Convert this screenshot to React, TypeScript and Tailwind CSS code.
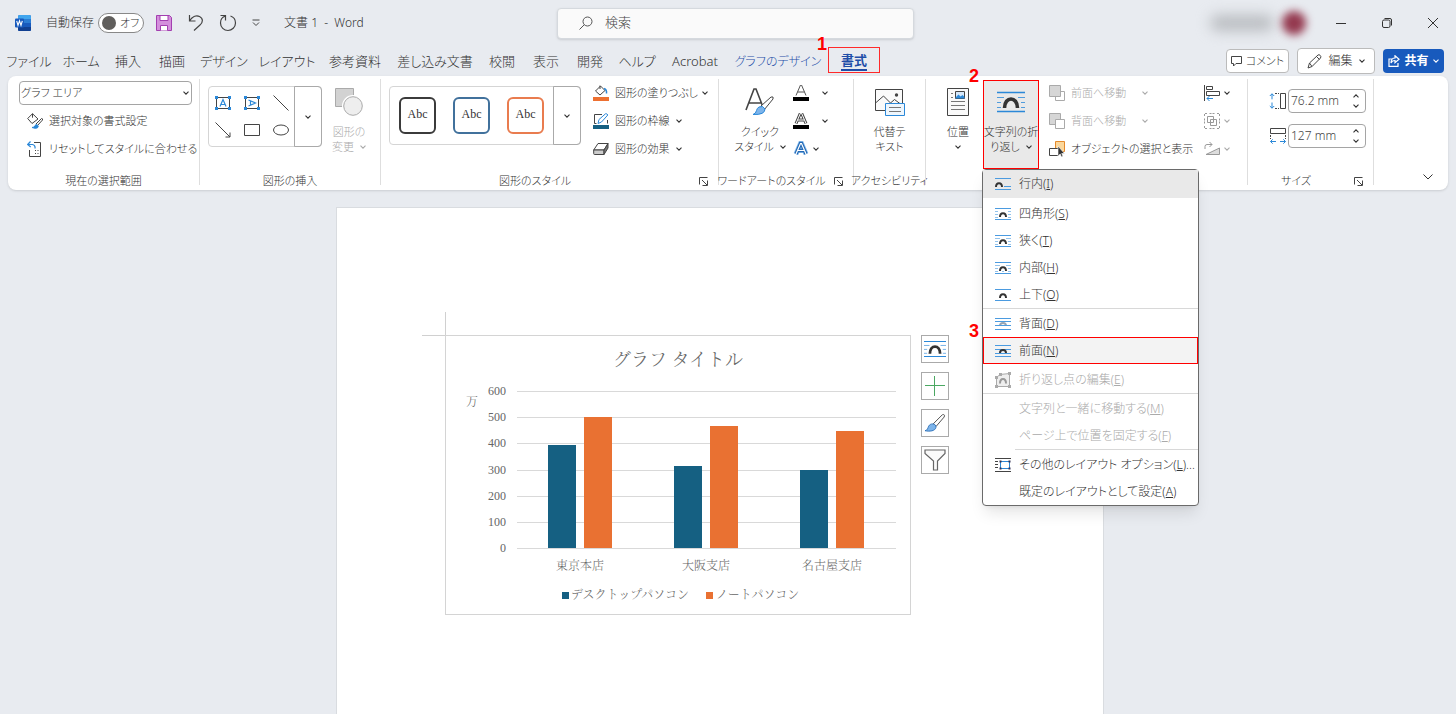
import type { ReactNode } from 'react';
import clsx from 'clsx';

const BLUE = '#2b88d8';
const INK = '#444';

type WrapKind = 'inline' | 'square' | 'tight' | 'through' | 'topBottom' | 'behind' | 'front';

function Chevron({ className }: { className?: string }) {
  return (
    <svg viewBox="0 0 6 4" className={clsx('h-1 w-1.5 shrink-0', className)} fill="none" stroke="currentColor" strokeWidth="1.1">
      <path d="M.5.6 3 3.1 5.5.6" />
    </svg>
  );
}

function WrapIcon({ kind }: { kind: WrapKind }) {
  const arch = (d: string, color = '#333') => <path d={d} stroke={color} strokeWidth="2" />;
  return (
    <svg viewBox="0 0 16 14" className="h-3.5 w-4 shrink-0" fill="none" stroke="#4b9be0">
      <path d="M0 1.5h16M0 12.5h16" />
      {kind === 'inline' && (
        <>
          {arch('M1 10c0-5 6-5 6 0')}
          <path d="M9 9.5h7" />
        </>
      )}
      {kind === 'square' && (
        <>
          <path d="M0 4.5h3M0 7.5h3M0 10.5h3M13 4.5h3M13 7.5h3M13 10.5h3" opacity=".6" />
          {arch('M5 10c0-5 6-5 6 0')}
        </>
      )}
      {kind === 'tight' && (
        <>
          <path d="M0 4.5h5M0 7.5h3M0 10.5h3M11 4.5h5M13 7.5h3M13 10.5h3" opacity=".6" />
          {arch('M5 10c0-5 6-5 6 0')}
        </>
      )}
      {kind === 'through' && (
        <>
          <path d="M0 4.5h5M0 7.5h3M0 10.5h3M11 4.5h5M13 7.5h3M13 10.5h3M7 10.5h2" opacity=".6" />
          {arch('M5 10c0-5 6-5 6 0')}
        </>
      )}
      {kind === 'topBottom' && arch('M5 10c0-5 6-5 6 0')}
      {kind === 'behind' && (
        <>
          {arch('M5 9c0-4 6-4 6 0', '#9aa5b1')}
          <path d="M0 4.5h16M0 8.5h16" />
        </>
      )}
      {kind === 'front' && (
        <>
          <path d="M0 5.5h16M0 9.5h16" />
          {arch('M5 9c0-4 6-4 6 0')}
        </>
      )}
    </svg>
  );
}

function BigWrapIcon({ className }: { className?: string }) {
  return (
    <svg viewBox="0 0 28 22" className={className} fill="none" stroke={BLUE}>
      <path d="M0 1.5h28M0 20.5h28" strokeWidth="1.4" />
      <path d="M0 6.5h7M0 11.5h4M0 16.5h4M21 6.5h7M24 11.5h4M24 16.5h4" opacity=".8" />
      <path d="M7.5 17c0-12 13-12 13 0" stroke="#333" strokeWidth="3.6" />
    </svg>
  );
}

function BrushIcon({ className }: { className?: string }) {
  return (
    <svg viewBox="0 0 24 22" className={className} fill="none">
      <path d="M10 12 20 2c1-1 3.500 0 2 2.500L13 15" fill="#fff" stroke="#555" strokeWidth="1.100" />
      <path d="M9.500 12c2 0 4 1.500 3.500 4-1 4-7 4.500-12 3.500 3-.5 3-3 4-5 1-1.800 2.500-2.500 4.500-2.500z" fill="#7db4ea" stroke="#2b6fb8" />
    </svg>
  );
}

const TABS = [
  { label: 'ファイル', width: 'w-9' },
  { label: 'ホーム', width: 'w-8' },
  { label: '挿入', width: 'w-[26px]' },
  { label: '描画', width: 'w-[26px]' },
  { label: 'デザイン', width: 'w-[42px]' },
  { label: 'レイアウト', width: 'w-[48px]' },
  { label: '参考資料', width: 'w-[52px]' },
  { label: '差し込み文書', width: 'w-[72px]' },
  { label: '校閲', width: 'w-[26px]' },
  { label: '表示', width: 'w-[26px]' },
  { label: '開発', width: 'w-[26px]' },
  { label: 'ヘルプ', width: 'w-8' },
  { label: 'Acrobat', width: 'w-[48px]' },
];

function TitleBar() {
  return (
    <header className="flex h-[46px] items-center pl-[15px] text-xs">
      <div className="flex flex-1 items-center whitespace-nowrap">
        <svg viewBox="0 0 16 16" className="h-4 w-4">
          <rect x="3" width="13" height="16" rx="1.500" fill="#185abd" />
          <path d="M3 1.500Q3 0 4.500 0h10Q16 0 16 1.500V4H3z" fill="#41a5ee" />
          <path d="M3 4h13v4H3z" fill="#2b7cd3" />
          <path d="M3 12h13v2.500q0 1.500-1.500 1.500h-10Q3 16 3 14.500z" fill="#103f91" />
          <rect y="3.500" width="9" height="9" rx="1" fill="#185abd" />
          <path d="m1.700 5.800 1.300 4.500 1.500-4.500L6 10.300l1.300-4.500" fill="none" stroke="#fff" strokeWidth="1.100" />
        </svg>
        <label className="ml-[15px] flex items-center gap-1">
          自動保存
          <input type="checkbox" className="peer sr-only" />
          <span className="flex h-5 w-[46px] items-center gap-1 rounded-full border border-[#888] bg-white pl-[3px] text-[11px]">
            <span className="h-3.5 w-3.5 shrink-0 rounded-full bg-[#605e5c]" />
            オフ
          </span>
        </label>
        <button type="button" aria-label="保存" className="ml-3">
          <svg viewBox="0 0 16 16" className="h-4 w-4" fill="#d48fdc" stroke="#a33fb0">
            <path d="M.5.5h13l2 2v13H.5z" />
            <path d="M4 .5h8v5H4zM4.500 15.500v-5h7v5" fill="#fff" />
          </svg>
        </button>
        <button type="button" aria-label="元に戻す" className="ml-4">
          <svg viewBox="0 0 16 18" className="h-[18px] w-4" fill="none" stroke={INK} strokeWidth="1.200">
            <path d="M1.500 1v6h6M1.500 7C4 3 8 .8 11.500 2.500c4 2 3.500 6 .5 8.500l-6 5.500" />
          </svg>
        </button>
        <button type="button" aria-label="やり直し" className="ml-[15px]">
          <svg viewBox="0 0 18 18" className="h-[18px] w-[18px]" fill="none" stroke={INK} strokeWidth="1.200">
            <path d="M1.500 1.500h5v5M6.500 2C3 3 1.500 6 1.500 9c0 4.500 3.500 7.500 7.500 7.500s7.500-3.500 7.500-7.500c0-3.500-2-6-5-7" />
          </svg>
        </button>
        <button type="button" aria-label="クイック アクセス ツール バーのユーザー設定" className="ml-[15px]">
          <svg viewBox="0 0 8 8" className="h-2 w-2" fill="none" stroke={INK}>
            <path d="M.5 1h7M1 3.500 4 6.500l3-3" />
          </svg>
        </button>
        <span className="ml-6 whitespace-pre">文書 1  -  Word</span>
      </div>

      <label className="flex h-[31px] w-[357px] items-center gap-3 rounded border border-[#d5d9de] bg-[#fafafa] pl-[21px] shadow-sm">
        <svg viewBox="0 0 14 14" className="h-3.5 w-3.5" fill="none" stroke="#555">
          <circle cx="8.500" cy="5.500" r="4.500" />
          <path d="M5.300 8.700.5 13.500" />
        </svg>
        <input type="search" aria-label="検索" placeholder="検索" className="flex-1 bg-transparent text-[13px] outline-none placeholder:text-[#444]" />
      </label>

      <div className="flex flex-1 items-center justify-end">
        <span className="h-4 w-16 rounded-full bg-[#b9bcc0] blur-[7px]" />
        <span className="mr-3 ml-2 h-6 w-6 rounded-full bg-[#94394f] blur-[4px]" />
        <button type="button" aria-label="最小化" className="flex w-[46px] justify-center">
          <svg viewBox="0 0 10 10" className="h-2.5 w-2.5" stroke="#333"><path d="M0 5.500h10" /></svg>
        </button>
        <button type="button" aria-label="元に戻す (縮小)" className="flex w-[46px] justify-center">
          <svg viewBox="0 0 10 10" className="h-2.5 w-2.5" fill="none" stroke="#333">
            <rect x=".5" y="2" width="7.500" height="7.500" rx="1.500" />
            <path d="M2.500.5H8Q9.500.5 9.500 2v5.500" />
          </svg>
        </button>
        <button type="button" aria-label="閉じる" className="flex w-[46px] justify-center">
          <svg viewBox="0 0 10 10" className="h-2.5 w-2.5" stroke="#333"><path d="m0 0 10 10M10 0 0 10" /></svg>
        </button>
      </div>
    </header>
  );
}

function TabBar() {
  return (
    <nav className="flex h-[30px] items-center pr-3 pl-[11px] text-[13px] whitespace-nowrap">
      <div className="flex items-center gap-[18px] pt-0.5">
        {TABS.map((tab) => (
          <button key={tab.label} type="button" className={clsx('flex shrink-0 justify-center', tab.width)}>
            {tab.label}
          </button>
        ))}
        <button type="button" className="flex w-[82px] justify-center text-xs text-[#1f4ea8]">グラフのデザイン</button>
      </div>
      <button type="button" className="relative mb-0.5 ml-[9px] h-[26px] border border-[#ff2a2a] px-3 font-bold text-[#1f4ea8]">
        <span className="-mt-px flex h-[23px] items-center border-b-2 border-[#1f4ea8] pt-1">書式</span>
        <Callout className="-top-3.5 -left-3">1</Callout>
      </button>
      <div className="ml-auto flex items-center gap-2 text-xs">
        <button type="button" className="flex h-6 w-[63px] items-center justify-center gap-1 rounded border border-[#bbb] bg-white text-[11px]">
          <svg viewBox="0 0 11 11" className="h-[11px] w-[11px]" fill="none" stroke={INK}><path d="M.5.5h10v7H5l-2.500 2.500V7.500h-2z" /></svg>
          コメント
        </button>
        <button type="button" className="flex h-[26px] w-[78px] items-center justify-center gap-1.5 rounded border border-[#bbb] bg-white">
          <svg viewBox="0 0 15 15" className="h-[15px] w-[15px]" fill="none" stroke={INK}><path d="m1 14 1.500-5L11 1q1-.8 2.200.4T13.500 4L5 12.500zM2.500 9 5 12.500M9.500 2.500l3 3" /></svg>
          編集
          <Chevron />
        </button>
        <button type="button" className="flex h-6 w-[61px] items-center justify-center gap-1 rounded bg-[#185abd] font-bold text-white">
          <svg viewBox="0 0 12 12" className="h-3 w-3" fill="none" stroke="#fff" strokeWidth="1.200"><path d="M4 4H1v7.400h9V8M7 .8l4 3.400-4 3.400V5.500Q4 5.500 3 8q0-5 4-5z" /></svg>
          共有
          <Chevron />
        </button>
      </div>
    </nav>
  );
}

function Callout({ children, className }: { children: ReactNode; className?: string }) {
  return (
    <span className={clsx("absolute z-30 font-['Liberation_Sans',sans-serif] text-lg leading-5 font-bold text-[#f00]", className)}>
      {children}
    </span>
  );
}

function Group({ label, className, launcher, children }: { label?: string; className: string; launcher?: boolean; children?: ReactNode }) {
  return (
    <section className={clsx('flex shrink-0 pt-[3px]', className)}>
      <div className="flex min-w-0 flex-1 flex-col pb-px">
        <div className="flex h-[84px]">{children}</div>
        <div className="mt-auto flex h-4 items-center whitespace-nowrap">
          <span className="flex min-w-0 flex-1 justify-center">{label}</span>
          {launcher && (
            <button type="button" aria-label={`${label}の詳細`} className="mx-2.5">
              <svg viewBox="0 0 9 9" className="h-[9px] w-[9px]" fill="none" stroke={INK}>
                <path d="M.5 7.5V.5h8M3 3l5 5M8.500 3.500v5h-5" />
              </svg>
            </button>
          )}
        </div>
      </div>
      <div className="h-[106px] w-px bg-[#dedede]" />
    </section>
  );
}

// Tall ribbon button: drawing on top, two caption lines below
function BigButton({ icon, line1, line2, chevron, className }: { icon: ReactNode; line1: string; line2?: string; chevron?: boolean; className?: string }) {
  return (
    <button type="button" className={clsx('flex shrink-0 flex-col items-center leading-[15px] whitespace-nowrap', className)}>
      <span className="flex h-[38px] items-center pb-px">{icon}</span>
      <span className="mt-[3px]">{line1}</span>
      <span className="flex h-[15px] items-center gap-1.5">
        {line2}
        {chevron && <Chevron />}
      </span>
    </button>
  );
}

function SmallButton({ icon, label, chevron, muted }: { icon: ReactNode; label?: string; chevron?: string; muted?: boolean }) {
  return (
    <button type="button" disabled={muted} className={clsx('flex h-7 items-center whitespace-nowrap', muted && 'text-[#aaa]')}>
      {icon}
      {label && <span className="ml-1.5">{label}</span>}
      {chevron && <Chevron className={chevron} />}
    </button>
  );
}

function SelectionGroup() {
  return (
    <Group label="現在の選択範囲" className="w-[192px]">
      <div className="flex min-w-0 flex-1 flex-col pr-[7px] pl-[11px]">
        <div className="grid h-7 items-center">
          <select aria-label="グラフの要素" className="col-start-1 row-start-1 h-6 w-full appearance-none rounded border border-[#a5a5a5] bg-white pl-px">
            <option>グラフ エリア</option>
          </select>
          <Chevron className="col-start-1 row-start-1 mr-[3px] justify-self-end" />
        </div>
        <div className="flex flex-col pl-2">
          <SmallButton
            label="選択対象の書式設定"
            icon={
              <svg viewBox="0 0 16 16" className="h-4 w-4" fill="none" stroke={INK}>
                <path d="M.7 5.500 5.500.7 11 6 5 10.500zM5.500.7v4" />
                <path d="m9 11 5.500-5.500q1.500 0 1 1.500L10.500 12.500" fill="#fff" />
                <path d="M5 14.500q3 0 3-2 1-1.500 2.500-.5 1.500 1.500 0 2.800-2 1.200-5.500-.3z" fill={BLUE} stroke={BLUE} />
              </svg>
            }
          />
          <SmallButton
            label="リセットしてスタイルに合わせる"
            icon={
              <svg viewBox="0 0 16 16" className="h-4 w-4 shrink-0" fill="none" stroke={INK}>
                <path d="M7 1.500h6.500v14h-11V9M8 9.500h1M8 12.500h1M10.500 9.500h1M10.500 12.500h1" />
                <path d="M3.500.5.700 3.500l3 2.500M1 3.500h4.500q3 .5 2.500 4" stroke={BLUE} strokeWidth="1.200" />
              </svg>
            }
          />
        </div>
      </div>
    </Group>
  );
}

function TextBoxShape({ vertical }: { vertical?: boolean }) {
  return (
    <svg viewBox="0 0 16 14" className="h-3.5 w-4" fill="none" stroke={INK}>
      <path d="M1.500 1.500h13v11h-13z" />
      <path d={vertical ? 'm4.500 4 7 3-7 3M6.500 5v4' : 'M5 10.500 8 3.500l3 7M6 8.500h4'} stroke={BLUE} strokeWidth="1.200" />
      <path d="M0 0h3v3H0zM13 0h3v3h-3zM0 11h3v3H0zM13 11h3v3h-3z" fill={BLUE} stroke="none" />
    </svg>
  );
}

function InsertShapesGroup() {
  const shapes = [
    <TextBoxShape />,
    <TextBoxShape vertical />,
    <svg viewBox="0 0 16 16" className="h-4 w-4" stroke={INK}><path d="m.5.5 15 15" /></svg>,
    <svg viewBox="0 0 16 16" className="h-4 w-4" fill="none" stroke={INK}><path d="m.5.5 14.500 14.500M15 10.500V15h-4.500" /></svg>,
    <svg viewBox="0 0 16 12" className="h-3 w-4" fill="none" stroke={INK}><path d="M.5.5h15v11H.5z" /></svg>,
    <svg viewBox="0 0 16 12" className="h-3 w-4" fill="none" stroke={INK}><ellipse cx="8" cy="6" rx="7.500" ry="5" /></svg>,
  ];
  return (
    <Group label="図形の挿入" className="w-[181px]">
      <div className="mt-[7px] ml-2 flex h-[61px] w-[114px] shrink-0 rounded border border-[#d5d5d5]">
        <div className="grid flex-1 grid-cols-3 grid-rows-2 py-0.5">
          {shapes.map((shape, i) => (
            <button key={i} type="button" aria-label={`図形 ${i + 1}`} className="flex items-center justify-center">{shape}</button>
          ))}
        </div>
        <button type="button" aria-label="図形をさらに表示" className="-m-px flex w-7 items-center justify-center rounded-r border border-[#aaa]"><Chevron /></button>
      </div>
      <BigButton
        className="ml-[9px] w-9 pt-1 text-[#aaa]"
        line1="図形の"
        line2="変更"
        chevron
        icon={
          <svg viewBox="0 0 28 28" className="h-7 w-7" stroke="#aaa">
            <path d="M.5.5h18v18H.5z" fill="#d2d2d2" />
            <circle cx="18" cy="18" r="11" fill="#fff" stroke="none" />
            <circle cx="18" cy="18" r="9.300" fill="#eee" />
          </svg>
        }
      />
    </Group>
  );
}

function ShapeStylesGroup() {
  const presets = ['border-[#3b3b3b]', 'border-[#41719c]', 'border-[#e97c4f]'];
  return (
    <Group label="図形のスタイル" className="w-[338px]" launcher>
      <div className="mt-[7px] ml-2 flex h-[59px] w-[192px] rounded border border-[#d5d5d5]">
        <div className="flex flex-1 items-center gap-[17px] pl-[9px]">
          {presets.map((border) => (
            <button key={border} type="button" className={clsx("h-[37px] w-[37px] rounded-md border-2 bg-white pb-1 font-['Liberation_Serif',serif] text-xs", border)}>
              Abc
            </button>
          ))}
        </div>
        <button type="button" aria-label="スタイルをさらに表示" className="-m-px flex w-7 items-center justify-center rounded-r border border-[#aaa]"><Chevron /></button>
      </div>
      <div className="ml-3 flex flex-col items-start">
        <SmallButton
          label="図形の塗りつぶし"
          chevron="ml-1"
          icon={
            <svg viewBox="0 0 16 16" className="h-4 w-4" fill="none" stroke={INK}>
              <path d="m2.500 6 5-5 4.500 4.500-5 4.500zM7 .5v3.500" />
              <path d="M11 3.500q3 1 2.500 5" stroke={BLUE} strokeWidth="1.500" />
              <path d="M0 12h16v4H0z" fill="#ed7031" stroke="none" />
            </svg>
          }
        />
        <SmallButton
          label="図形の枠線"
          chevron="ml-1.5"
          icon={
            <svg viewBox="0 0 16 16" className="h-4 w-4" fill="none" stroke={INK}>
              <path d="M9 1.500H1.500v9h2M14.500 7v3.500" />
              <path d="m5 10.500 1-4L12.500.800q1.500-.5 2.300 1.200L8.500 9z" stroke={BLUE} fill="#fff" />
              <path d="M0 12h16v4H0z" fill="#156082" stroke="none" />
            </svg>
          }
        />
        <SmallButton
          label="図形の効果"
          chevron="ml-1.5"
          icon={
            <svg viewBox="0 0 16 14" className="h-3.5 w-4" stroke={INK}>
              <path d="M.7 8 5 1.500h10L11 8z" fill="#fff" />
              <path d="M.7 8H11v4.500H1.500Q.7 12.500.7 11.500z" fill="#ccc" />
              <path d="m11 8 4-6.500V6l-4 6.500z" fill="#777" />
            </svg>
          }
        />
      </div>
    </Group>
  );
}

function WordArtGroup() {
  const letter = 'M3 10.500 7.500 0h1L13 10.500M4.700 7h6.600';
  return (
    <Group label="ワードアートのスタイル" className="w-[135px]" launcher>
      <BigButton
        className="ml-3 w-[58px] pt-1"
        line1="クイック"
        line2="スタイル"
        chevron
        icon={
          <svg viewBox="0 0 30 30" className="h-[30px] w-[30px]" fill="none" stroke={INK}>
            <path d="M1 23 9 2h2l7 18M4 16h12" strokeWidth="1.600" />
            <path d="m16 19 10-9q3-1 2 2l-9 11" fill="#fff" />
            <path d="M14 20q4-2 6 2 0 6-12 5.500 3-1 3.500-4 .5-2.500 2.500-3.500z" fill="#7db4ea" stroke={BLUE} />
          </svg>
        }
      />
      <div className="ml-1 flex flex-col items-start">
        <SmallButton
          chevron="ml-[13px]"
          icon={
            <svg viewBox="0 0 16 16" className="h-4 w-4" fill="none" stroke="#555">
              <path d={letter} />
              <path d="M0 12h16v4H0z" fill="#000" stroke="none" />
            </svg>
          }
        />
        <SmallButton
          chevron="ml-[13px]"
          icon={
            <svg viewBox="0 0 16 16" className="h-4 w-4" fill="none">
              <path d={letter} stroke="#444" strokeWidth="3" />
              <path d={letter} stroke="#fff" />
              <path d="M0 12h16v4H0z" fill="#000" />
            </svg>
          }
        />
        <SmallButton
          chevron="ml-1"
          icon={
            <svg viewBox="0 -2 16 15" className="h-4 w-4" fill="none">
              <path d={letter} stroke="#8fc0ef" strokeWidth="5" />
              <path d={letter} stroke="#2369b5" strokeWidth="3.400" />
              <path d={letter} stroke="#fff" strokeWidth="1.200" />
            </svg>
          }
        />
      </div>
    </Group>
  );
}

type MenuItem = {
  text: string;
  accel: string;
  suffix?: string;
  icon?: ReactNode;
  muted?: boolean;
  active?: boolean;
  marked?: boolean;
  gap?: 'plain' | 'line' | 'inset';
};

const MENU: MenuItem[] = [
  { text: '行内', accel: 'I', icon: <WrapIcon kind="inline" />, active: true, gap: 'plain' },
  { text: '四角形', accel: 'S', icon: <WrapIcon kind="square" /> },
  { text: '狭く', accel: 'T', icon: <WrapIcon kind="tight" /> },
  { text: '内部', accel: 'H', icon: <WrapIcon kind="through" /> },
  { text: '上下', accel: 'O', icon: <WrapIcon kind="topBottom" />, gap: 'line' },
  { text: '背面', accel: 'D', icon: <WrapIcon kind="behind" /> },
  { text: '前面', accel: 'N', icon: <WrapIcon kind="front" />, marked: true, gap: 'plain' },
  {
    text: '折り返し点の編集',
    accel: 'E',
    muted: true,
    gap: 'line',
    icon: (
      <svg viewBox="0 0 16 16" className="h-4 w-4" fill="none" stroke="#aaa">
        <path d="M1.500 5.500 5 2.500l9.500-1v13h-13z" fill="#eee" />
        <path d="M5 11.500c0-6 6-6 6 0" stroke="#999" strokeWidth="2" />
        <path d="M0 4h3v3H0zM4 1h3v3H4zM13 0h3v3h-3zM0 13h3v3H0zM13 13h3v3h-3z" fill="#aaa" stroke="none" />
      </svg>
    ),
  },
  { text: '文字列と一緒に移動する', accel: 'M', muted: true },
  { text: 'ページ上で位置を固定する', accel: 'F', muted: true, gap: 'inset' },
  {
    text: 'その他のレイアウト オプション',
    accel: 'L',
    suffix: '...',
    icon: (
      <svg viewBox="0 0 16 16" className="h-4 w-4" fill="none" stroke={INK}>
        <path d="M0 1.500h16M0 14.500h16M0 4.500h3M0 7.500h3M0 10.500h3" />
        <path d="M5.500 4.500h9v7h-9z" stroke={BLUE} />
        <path d="M4.500 3.500h2v2h-2zM13.500 3.500h2v2h-2zM4.500 10.500h2v2h-2zM13.500 10.500h2v2h-2z" fill="#335" stroke="none" />
      </svg>
    ),
  },
  { text: '既定のレイアウトとして設定', accel: 'A' },
];

function WrapMenu() {
  return (
    <ul role="menu" className="absolute top-[89px] -left-px z-20 w-[217px] rounded border border-[#6a6a6a] bg-white text-xs shadow-lg">
      {MENU.map((item) => (
        <li key={item.accel} role="none" className="relative">
          <button
            type="button"
            role="menuitem"
            disabled={item.muted}
            className={clsx(
              'flex w-full items-center gap-2 border pr-1 pl-[11px] text-left whitespace-nowrap',
              item.active ? 'h-7 border-[#e9e9e9] bg-[#e9e9e9]' : 'h-[27px]',
              item.marked && 'border-[#f00] bg-[#f3f3f3]',
              !item.active && !item.marked && 'border-transparent',
              item.muted && 'text-[#aaa]',
            )}
          >
            <span className="flex w-4 shrink-0 justify-center">{item.icon}</span>
            <span>
              {item.text}(<u>{item.accel}</u>){item.suffix}
            </span>
          </button>
          {item.gap && (
            <div className={clsx('h-0.5', item.gap !== 'plain' && 'border-t border-[#d8d8d8]', item.gap === 'inset' && 'ml-8')} />
          )}
          {item.marked && <Callout className="-top-4 -left-3.5">3</Callout>}
        </li>
      ))}
    </ul>
  );
}

function ArrangeGroup() {
  return (
    <Group className="w-[322px]">
      <BigButton
        className="ml-4 w-8 pt-1"
        line1="位置"
        chevron
        icon={
          <svg viewBox="0 0 22 28" className="h-7 w-[22px]" fill="none" stroke={INK}>
            <path d="M.5.5h21v27H.5z" fill="#fafafa" />
            <path d="M4 5.500h2M4 9.500h2M4 13.500h14M4 17.500h14M4 21.500h14" stroke="#777" />
            <path d="M8.500 3.500h9v7h-9z" fill="#d6e8fa" />
            <path d="m8.500 9.500 3-3 2 2 2-1.500 2 2v1.500h-9z" fill={BLUE} stroke="none" />
          </svg>
        }
      />
      <div className="relative mt-px ml-[9px] h-[89px] w-14 shrink-0">
        <BigButton
          className="h-[89px] w-14 border border-[#f00] bg-[#e9e9e9] pt-0.5"
          line1="文字列の折"
          line2="り返し"
          chevron
          icon={<BigWrapIcon className="h-[22px] w-7" />}
        />
        <Callout className="-top-3.5 -left-3.5">2</Callout>
        <WrapMenu />
      </div>
      <div className="ml-2.5 flex w-[146px] shrink-0 flex-col items-start">
        <SmallButton
          muted
          label="前面へ移動"
          chevron="ml-4"
          icon={
            <svg viewBox="0 0 16 16" className="h-4 w-4" fill="none" stroke="#aaa"><path d="M12 6.500h3.500v9h-9V12" /><path d="M.5.5h11v11H.5z" fill="#d6d6d6" /></svg>
          }
        />
        <SmallButton
          muted
          label="背面へ移動"
          chevron="ml-4"
          icon={
            <svg viewBox="0 0 16 16" className="h-4 w-4" fill="none" stroke="#aaa"><path d="M.5.5h11v11H.5z" fill="#d6d6d6" /><path d="M6.500 6.500h9v9h-9z" fill="#fff" /></svg>
          }
        />
        <SmallButton
          label="オブジェクトの選択と表示"
          icon={
            <svg viewBox="0 0 16 16" className="h-4 w-4" fill="none" stroke={INK}>
              <path d="M6.500.5h9v10h-9z" fill="#fbd79b" stroke="#e58a2c" />
              <path d="M.5 7.500h9v7h-9z" fill="#fff" />
              <path d="M9 5v10l2.200-2 1.300 3 1.500-.7-1.300-2.800H15.500z" fill="#333" stroke="#fff" strokeWidth=".6" />
            </svg>
          }
        />
      </div>
      <div className="ml-[9px] flex flex-col items-start">
        <SmallButton
          chevron="ml-1"
          icon={
            <svg viewBox="0 0 16 16" className="h-4 w-4" fill="none" stroke={INK}>
              <path d="M.5 0v16M2.500 1.500h6v3h-6zM2.500 6.500h13v4h-13z" />
              <path d="M9 13.500H3M5.500 11 3 13.500 5.500 16" stroke={BLUE} />
            </svg>
          }
        />
        <SmallButton
          muted
          chevron="ml-1"
          icon={
            <svg viewBox="0 0 16 16" className="h-4 w-4" fill="none" stroke="#999">
              <path d="M3.500 3.500h6v6h-6zM6.500 6.500h6v6h-6z" />
              <path d="M.5 3V.5H3M13 .5h2.500V3M.5 13v2.500H3M13 15.500h2.500V13M.5 5.500v5M15.500 5.500v5M5.500.5h5M5.500 15.500h5" strokeDasharray="2 1" />
            </svg>
          }
        />
        <SmallButton
          muted
          chevron="ml-1"
          icon={
            <svg viewBox="0 0 16 16" className="h-4 w-4" fill="none" stroke="#999">
              <path d="M2 13.500 15.500 7v6.500z" fill="#ddd" />
              <path d="M1 8V5.500Q1 3.500 3 3.500h5M5.500 1 8 3.500 5.500 6" />
            </svg>
          }
        />
      </div>
    </Group>
  );
}

function SizeField({ label, value, icon }: { label: string; value: string; icon: ReactNode }) {
  return (
    <div className="flex items-center">
      {icon}
      <div className="ml-px flex h-6 w-[78px] items-center rounded border border-[#a5a5a5] bg-white pr-1.5">
        <input aria-label={label} defaultValue={value} className="w-0 flex-1 pl-0.5 text-xs text-[#444] outline-none" />
        <span className="flex flex-col gap-1.5">
          <button type="button" aria-label={`${label}を増やす`}><Chevron className="rotate-180" /></button>
          <button type="button" aria-label={`${label}を減らす`}><Chevron /></button>
        </span>
      </div>
    </div>
  );
}

function SizeGroup() {
  return (
    <Group label="サイズ" className="w-[126px]" launcher>
      <div className="mt-2.5 ml-[21px] flex flex-col gap-[11px]">
        <SizeField
          label="高さ"
          value="76.2 mm"
          icon={
            <svg viewBox="0 0 18 16" className="h-4 w-[18px]" fill="none" stroke={INK}>
              <path d="M11.500.5h5v15h-5z" />
              <path d="M6 .5h4M6 15.500h4" strokeDasharray="2 1" />
              <path d="M3 .8v5.500M.8 3 3 .8 5.200 3M3 15.200V9.500M.8 13 3 15.200 5.200 13" stroke={BLUE} />
            </svg>
          }
        />
        <SizeField
          label="幅"
          value="127 mm"
          icon={
            <svg viewBox="0 0 18 16" className="h-4 w-[18px]" fill="none" stroke={INK}>
              <path d="M1.500.5h15v5h-15z" />
              <path d="M1.500 7v4M16.500 7v4" strokeDasharray="2 1" />
              <path d="M1.500 13.500H7M3.700 11.300l-2.200 2.200 2.200 2.200M16.500 13.500H11M14.300 11.300l2.200 2.200-2.200 2.200" stroke={BLUE} />
            </svg>
          }
        />
      </div>
    </Group>
  );
}

function Ribbon() {
  return (
    <div className="relative z-10 mx-2 flex h-[114px] rounded-lg bg-white text-[11px] shadow">
      <SelectionGroup />
      <InsertShapesGroup />
      <ShapeStylesGroup />
      <WordArtGroup />
      <Group label="アクセシビリティ" className="w-[72px]">
        <BigButton
          className="w-full pt-1"
          line1="代替テ"
          line2="キスト"
          icon={
            <svg viewBox="0 0 30 28" className="h-7 w-[30px]" fill="none" stroke={INK}>
              <path d="M.5 1.500h27v21H.5z" fill="#fafafa" />
              <path d="m.5 15 8-7 7 7 4-3.500 8 6" />
              <circle cx="21.500" cy="7" r="1.700" fill={INK} stroke="none" />
              <path d="M10.500 15.500h19v12h-19z" fill="#eef6fd" stroke={BLUE} />
              <path d="M14 19.500h12M14 23.500h12" stroke="#777" />
            </svg>
          }
        />
      </Group>
      <ArrangeGroup />
      <SizeGroup />
      <div className="flex flex-1 items-end justify-end pr-[15px] pb-2.5">
        <button type="button" aria-label="リボンを折りたたむ">
          <svg viewBox="0 0 10 6" className="h-1.5 w-2.5" fill="none" stroke="#333"><path d="M.5.5 5 5 9.500.5" /></svg>
        </button>
      </div>
    </div>
  );
}

const SERIES = [
  { name: 'デスクトップパソコン', color: '#156082' },
  { name: 'ノートパソコン', color: '#e97132' },
];

const BRANCHES = [
  { name: '東京本店', values: [392, 500] },
  { name: '大阪支店', values: [315, 466] },
  { name: '名古屋支店', values: [298, 448] },
];

const TICKS = [0, 100, 200, 300, 400, 500, 600];

function toY(value: number) {
  return Math.round(213 - (value * 157) / 600);
}

function SalesChart() {
  return (
    <svg
      viewBox="0 0 466 280"
      className="h-[280px] w-[466px] shrink-0 font-['Liberation_Serif','Noto_Serif_CJK_JP','Noto_Sans_CJK_JP',serif] text-xs font-light [font-feature-settings:normal]"
      fill="#666"
    >
      <rect x=".5" y=".5" width="465" height="279" fill="#fff" stroke="#d4d4d4" />
      <text x="233" y="31" textAnchor="middle" className="text-lg">グラフ タイトル</text>
      <text x="21" y="71">万</text>
      {TICKS.map((tick) => (
        <g key={tick}>
          <path d={`M72 ${toY(tick) + 0.5}h379`} stroke="#d9d9d9" />
          <text x="61" y={toY(tick) + 4} textAnchor="end">{tick}</text>
        </g>
      ))}
      {BRANCHES.map((branch, i) => (
        <g key={branch.name}>
          {branch.values.map((value, j) => (
            <rect key={SERIES[j].name} x={103 + i * 126 + j * 36} y={toY(value)} width="28" height={213 - toY(value)} fill={SERIES[j].color} />
          ))}
          <text x={135 + i * 126} y="235" textAnchor="middle">{branch.name}</text>
        </g>
      ))}
      {SERIES.map((series, i) => (
        <g key={series.name}>
          <rect x={117 + i * 144} y="257" width="7" height="7" fill={series.color} />
          <text x={126 + i * 145} y="264">{series.name}</text>
        </g>
      ))}
    </svg>
  );
}

function ChartTools() {
  const tools = [
    { name: 'レイアウト オプション', icon: <BigWrapIcon className="h-[18px] w-[22px]" /> },
    { name: 'グラフ要素', icon: <svg viewBox="0 0 20 20" className="h-5 w-5"><path d="M0 9.500h20M9.500 0v20" stroke="#4ba862" /></svg> },
    { name: 'グラフ スタイル', icon: <BrushIcon className="h-5 w-[22px]" /> },
    {
      name: 'グラフ フィルター',
      icon: <svg viewBox="0 0 22 22" className="h-[22px] w-[22px]" fill="#fafafa" stroke="#666" strokeWidth="1.200"><path d="M1 1h20v3.500l-7.500 7.500v9h-4v-9L1 4.500z" /></svg>,
    },
  ];
  return (
    <div className="ml-[10px] flex flex-col gap-[9px]">
      {tools.map((tool) => (
        <button key={tool.name} type="button" aria-label={tool.name} className="flex h-7 w-7 items-center justify-center border border-[#aaa] bg-white">
          {tool.icon}
        </button>
      ))}
    </div>
  );
}

export default function App() {
  return (
    <div className="flex h-screen flex-col overflow-hidden bg-[#e8ebf0] font-['Noto_Sans','Noto_Sans_CJK_JP',sans-serif] font-light text-[#333] [font-feature-settings:'palt']">
      <TitleBar />
      <TabBar />
      <Ribbon />
      <main className="mt-[17px] flex flex-1 justify-center pr-4">
        <div className="w-[768px] border-x border-t border-[#d9dce0] bg-white pt-[104px] pl-[85px]">
          {/* margin corner mark */}
          <div className="h-6 w-6 border-r border-b border-[#d0d0d0]" />
          <div className="-mt-px ml-[23px] flex items-start">
            <SalesChart />
            <ChartTools />
          </div>
        </div>
      </main>
    </div>
  );
}
